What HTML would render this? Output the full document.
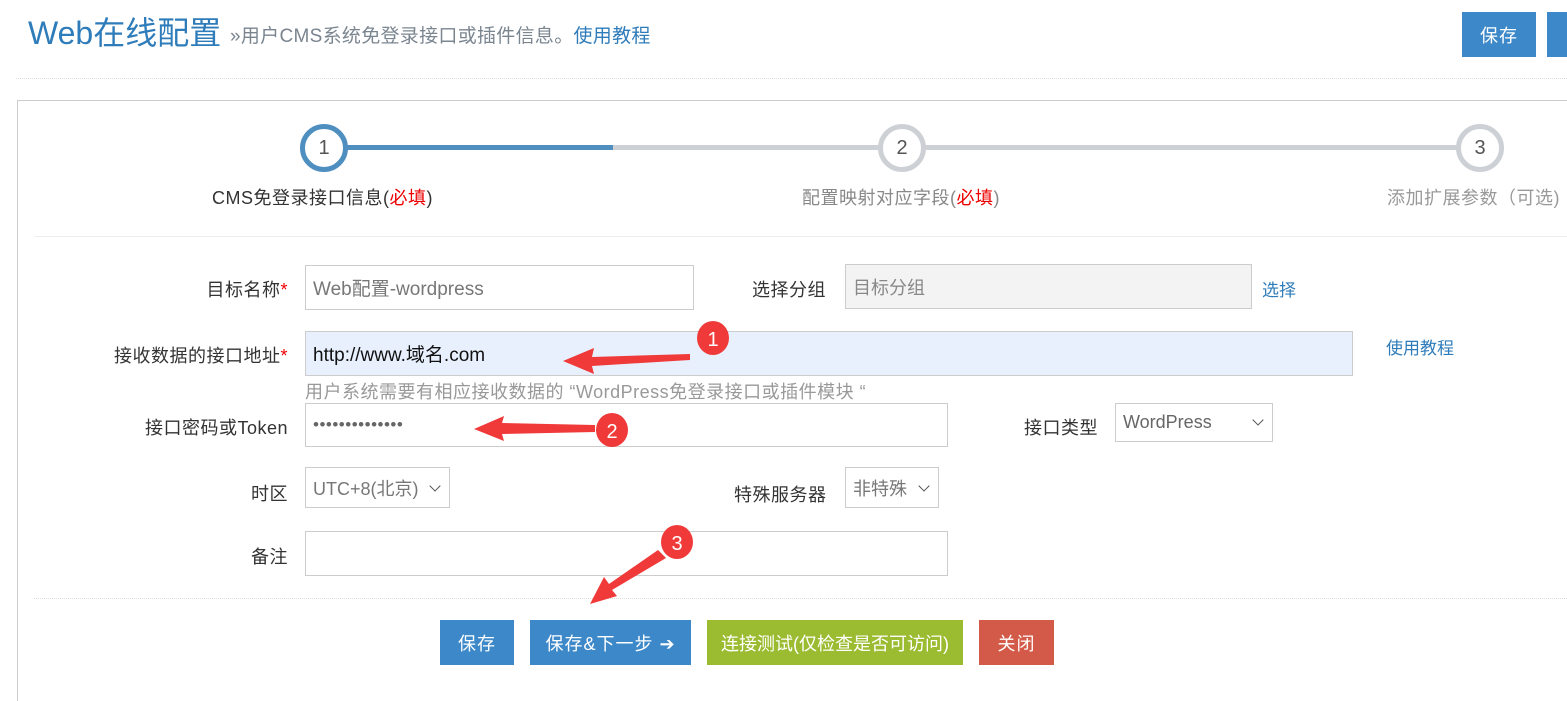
<!DOCTYPE html>
<html><head><meta charset="utf-8"><style>
body{margin:0;width:1567px;height:687px;overflow:hidden;background:#fff;font-family:"Liberation Sans","Noto Sans CJK SC",sans-serif;position:relative}
.a{position:absolute;white-space:nowrap}
.lbl{position:absolute;font-size:18px;letter-spacing:0.5px;color:#333;text-align:right;width:260px;left:28px}
.inp{position:absolute;border:1px solid #ccc;box-sizing:border-box;font-size:18px;color:#777;padding-left:7px;display:flex;align-items:center}
.btn{position:absolute;color:#fff;font-size:18px;display:flex;align-items:center;justify-content:center;letter-spacing:1px}
.circ{position:absolute;width:48px;height:48px;border-radius:50%;box-sizing:border-box;border:5px solid #cdd0d4;background:#fff;font-size:20px;color:#555;display:flex;align-items:center;justify-content:center}
.chev{position:absolute;width:7px;height:7px;border-right:1.5px solid #555;border-bottom:1.5px solid #555;transform:rotate(45deg)}
</style></head><body>
<div class="a" style="left:28px;top:8px;font-size:32px;color:#2f7cba">Web在线配置</div>
<div class="a" style="left:230px;top:21px;font-size:19px;letter-spacing:0.3px;color:#7a8590">»用户CMS系统免登录接口或插件信息。<span style="color:#2f7cba">使用教程</span></div>
<div class="btn" style="left:1462px;top:12px;width:74px;height:45px;background:#3d88c8">保存</div>
<div class="btn" style="left:1547px;top:12px;width:40px;height:45px;background:#3d88c8"></div>
<div class="a" style="left:16px;top:78px;width:1551px;border-top:1px dotted #ddd"></div>
<div class="a" style="left:17px;top:100px;width:1560px;height:600px;border-top:1px solid #ccc;border-left:1px solid #ccc"></div>

<div class="a" style="left:340px;top:145px;width:273px;height:5px;background:#4f8fc0"></div>
<div class="a" style="left:613px;top:145px;width:860px;height:5px;background:#cdd0d4"></div>
<div class="circ" style="left:300px;top:124px;border-color:#4f8fc0">1</div>
<div class="circ" style="left:878px;top:124px">2</div>
<div class="circ" style="left:1456px;top:124px">3</div>
<div class="a" style="left:212px;top:184px;font-size:18px;letter-spacing:0.5px;color:#333">CMS免登录接口信息(<span style="color:#e00">必填</span>)</div>
<div class="a" style="left:802px;top:184px;font-size:18px;letter-spacing:0.5px;color:#888">配置映射对应字段(<span style="color:#e00">必填</span>)</div>
<div class="a" style="left:1387px;top:184px;font-size:18px;letter-spacing:0.5px;color:#999">添加扩展参数（可选)</div>
<div class="a" style="left:34px;top:236px;width:1533px;border-top:1px solid #eee"></div>

<div class="lbl" style="top:276px">目标名称<span style="color:#e00">*</span></div>
<div class="inp" style="left:305px;top:265px;width:389px;height:45px;font-size:19px">Web配置-wordpress</div>
<div class="a" style="left:752px;top:276px;font-size:18px;letter-spacing:0.5px;color:#333">选择分组</div>
<div class="inp" style="left:845px;top:264px;width:407px;height:45px;background:#f3f3f3;color:#888">目标分组</div>
<div class="a" style="left:1262px;top:276px;font-size:17px;color:#2f7cba">选择</div>

<div class="lbl" style="top:342px">接收数据的接口地址<span style="color:#e00">*</span></div>
<div class="inp" style="left:305px;top:331px;width:1048px;height:45px;background:#e8f0fe;color:#111;font-size:19px">http://www.域名.com</div>
<div class="a" style="left:1386px;top:334px;font-size:17px;color:#2f7cba">使用教程</div>
<div class="a" style="left:305px;top:378px;font-size:18px;letter-spacing:0.5px;color:#999">用户系统需要有相应接收数据的 “WordPress免登录接口或插件模块 “</div>

<div class="lbl" style="top:414px">接口密码或Token</div>
<div class="inp" style="left:305px;top:403px;width:643px;height:44px;color:#666;letter-spacing:0.5px;font-size:17px">••••••••••••••</div>
<div class="a" style="left:1024px;top:414px;font-size:18px;letter-spacing:0.5px;color:#333">接口类型</div>
<div class="inp" style="left:1115px;top:403px;width:158px;height:39px;color:#666">WordPress</div>
<div class="chev" style="left:1254px;top:416px"></div>

<div class="lbl" style="top:480px">时区</div>
<div class="inp" style="left:305px;top:467px;width:145px;height:41px;color:#777">UTC+8(北京)</div>
<div class="chev" style="left:431px;top:482px"></div>
<div class="a" style="left:734px;top:481px;font-size:18px;letter-spacing:0.5px;color:#333">特殊服务器</div>
<div class="inp" style="left:845px;top:467px;width:94px;height:41px;color:#777">非特殊</div>
<div class="chev" style="left:920px;top:482px"></div>

<div class="lbl" style="top:543px">备注</div>
<div class="inp" style="left:305px;top:531px;width:643px;height:45px"></div>
<div class="a" style="left:34px;top:598px;width:1533px;border-top:1px dotted #ddd"></div>

<div class="btn" style="left:440px;top:620px;width:74px;height:45px;background:#3d88c8">保存</div>
<div class="btn" style="left:530px;top:620px;width:161px;height:45px;background:#3d88c8">保存&amp;下一步 ➔</div>
<div class="btn" style="left:707px;top:620px;width:256px;height:45px;background:#9bbb30;letter-spacing:0">连接测试(仅检查是否可访问)</div>
<div class="btn" style="left:979px;top:620px;width:75px;height:45px;background:#d35a48">关闭</div>

<svg class="a" style="left:0;top:0" width="1567" height="687">
<g fill="#f03a3a">
<polygon points="690,354 592,357 594,348 563,361 594,374 592,366 690,360"/>
<ellipse cx="713" cy="338" rx="16" ry="17"/>
<polygon points="595,425 502,423 504,416 474,429 504,441 502,434 595,432"/>
<ellipse cx="612" cy="430" rx="16" ry="17"/>
<polygon points="658,550 609,584 604,577 590,604 617,596 612,590 666,558"/>
<ellipse cx="677" cy="542" rx="16" ry="17"/>
</g>
<g fill="#fff" font-size="20" font-family="Liberation Sans,sans-serif" text-anchor="middle">
<text x="713" y="346">1</text><text x="612" y="438">2</text><text x="677" y="550">3</text>
</g>
</svg>
</body></html>
